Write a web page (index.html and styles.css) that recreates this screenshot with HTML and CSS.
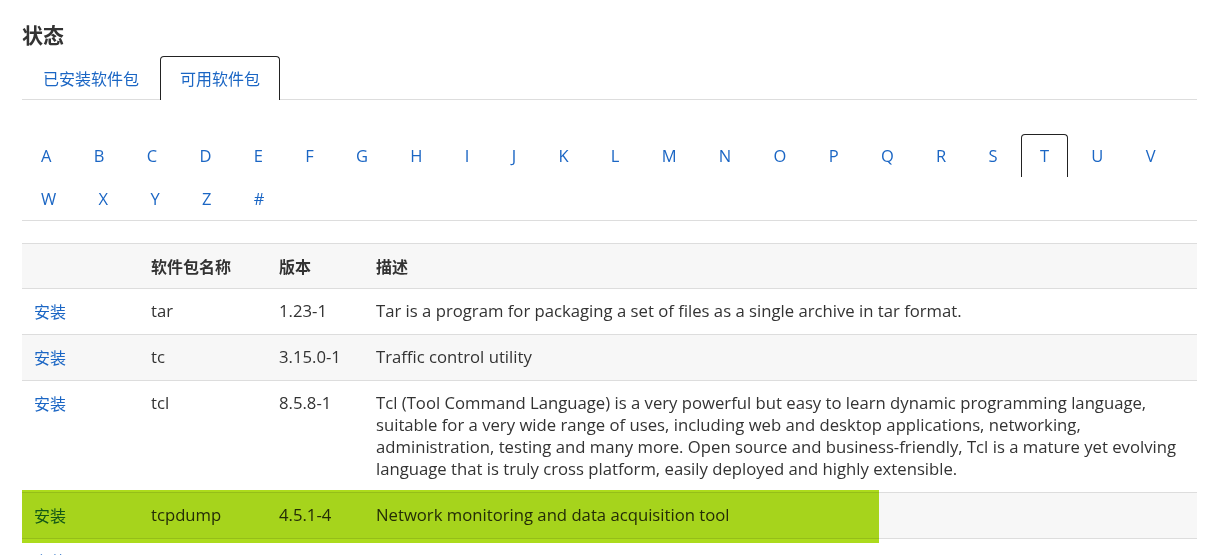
FILE: index.html
```html
<!DOCTYPE html>
<html lang="zh-CN">
<head>
<meta charset="utf-8">
<title>状态</title>
<link rel="stylesheet" href="styles.css">
</head>
<body>
<div class="page">
  <h2 class="title">状态</h2>
  <ul class="tabs">
    <li class="tab"><a href="#">已安装软件包</a></li>
    <li class="tab active"><a href="#">可用软件包</a></li>
  </ul>
  <ul class="letters">
    <li><a href="#">A</a></li><li><a href="#">B</a></li><li><a href="#">C</a></li><li><a href="#">D</a></li><li><a href="#">E</a></li><li><a href="#">F</a></li><li><a href="#">G</a></li><li><a href="#">H</a></li><li><a href="#">I</a></li><li><a href="#">J</a></li><li><a href="#">K</a></li><li><a href="#">L</a></li><li><a href="#">M</a></li><li><a href="#">N</a></li><li><a href="#">O</a></li><li><a href="#">P</a></li><li><a href="#">Q</a></li><li><a href="#">R</a></li><li><a href="#">S</a></li><li class="active"><a href="#">T</a></li><li><a href="#">U</a></li><li><a href="#">V</a></li><li><a href="#">W</a></li><li><a href="#">X</a></li><li><a href="#">Y</a></li><li><a href="#">Z</a></li><li><a href="#">#</a></li>
  </ul>
  <table class="pkgs">
    <colgroup><col class="c1"><col class="c2"><col class="c3"><col></colgroup>
    <thead>
      <tr><th></th><th class="cjk">软件包名称</th><th class="cjk">版本</th><th class="cjk">描述</th></tr>
    </thead>
    <tbody>
      <tr><td><a class="install" href="#">安装</a></td><td>tar</td><td>1.23-1</td><td>Tar is a program for packaging a set of files as a single archive in tar format.</td></tr>
      <tr><td><a class="install" href="#">安装</a></td><td>tc</td><td>3.15.0-1</td><td>Traffic control utility</td></tr>
      <tr><td><a class="install" href="#">安装</a></td><td>tcl</td><td>8.5.8-1</td><td>Tcl (Tool Command Language) is a very powerful but easy to learn dynamic programming language, suitable for a very wide range of uses, including web and desktop applications, networking, administration, testing and many more. Open source and business-friendly, Tcl is a mature yet evolving language that is truly cross platform, easily deployed and highly extensible.</td></tr>
      <tr><td><a class="install" href="#">安装</a></td><td>tcpdump</td><td>4.5.1-4</td><td>Network monitoring and data acquisition tool</td></tr>
      <tr><td><a class="install" href="#">安装</a></td><td>tcsh</td><td>6.17-1</td><td>An enhanced version of csh, the C shell</td></tr>
    </tbody>
  </table>
  <div class="highlight"></div>
</div>
</body>
</html>
```
FILE: styles.css
```css
html, body {
  margin: 0;
  padding: 0;
  background: #fff;
}
body {
  font-family: "Open Sans", "Noto Sans CJK SC", sans-serif;
  color: #333;
  overflow: hidden;
}
.page {
  position: relative;
  width: 1175px;
  margin-left: 22px;
  padding-top: 19px;
}
a {
  color: #1b66c4;
  text-decoration: none;
}
.title {
  margin: 0;
  font-family: "Noto Sans CJK SC", sans-serif;
  font-size: 21px;
  line-height: 30px;
  font-weight: 700;
  color: #333;
}
.tabs {
  list-style: none;
  margin: 7px 0 0;
  padding: 0;
  display: flex;
  border-bottom: 1px solid #ddd;
}
.tab {
  margin-bottom: -1px;
}
.tab a {
  display: block;
  height: 43px;
  line-height: 43px;
  padding: 0 20px;
  font-family: "Noto Sans CJK SC", sans-serif;
  font-size: 16px;
  border: 1px solid transparent;
  border-bottom: none;
  border-radius: 4px 4px 0 0;
}
.tab.active a {
  border-color: #222;
  background: #fff;
  padding: 0 19px;
}
.letters {
  list-style: none;
  margin: 34px 0 0;
  padding: 0;
  display: flex;
  flex-wrap: wrap;
  column-gap: 4.3px;
  border-bottom: 1px solid #ddd;
}
.letters a {
  display: block;
  height: 42px;
  line-height: 41px;
  padding: 0 18px;
  font-size: 16.5px;
  border: 1px solid transparent;
  border-bottom: none;
  border-radius: 4px 4px 0 0;
}
.letters .active a {
  border-color: #222;
}
.pkgs {
  margin-top: 22px;
  width: 100%;
  border-collapse: collapse;
  table-layout: fixed;
  font-size: 16.7px;
}
.pkgs .c1 { width: 117px; }
.pkgs .c2 { width: 128px; }
.pkgs .c3 { width: 97px; }
.pkgs th, .pkgs td {
  padding: 11px 12px 12px;
  text-align: left;
  vertical-align: top;
  line-height: 22px;
  border-top: 1px solid #ddd;
}
.pkgs thead th {
  padding-bottom: 11px;
  background: #f7f7f7;
  border-bottom: 1px solid #ddd;
  font-weight: 700;
}
.pkgs .cjk {
  font-family: "Noto Sans CJK SC", sans-serif;
  font-size: 16px;
}
.pkgs tbody tr:nth-child(even) td {
  background: #f7f7f7;
}
.install {
  display: block;
  font-family: "Noto Sans CJK SC", sans-serif;
  font-size: 16px;
}
.highlight {
  position: absolute;
  left: 0;
  top: 490px;
  width: 857px;
  height: 53px;
  background: #acdb1c;
  mix-blend-mode: multiply;
}
```
